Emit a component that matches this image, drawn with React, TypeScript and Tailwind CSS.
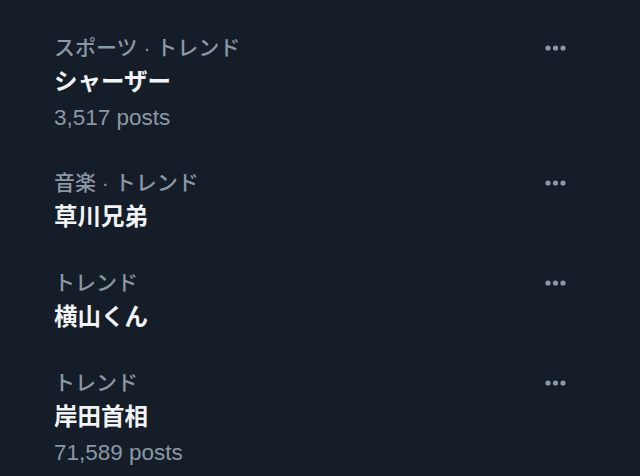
import React from "react";

type Item = { cat: string; title: string; posts?: string };

const items: Item[] = [
  { cat: "スポーツ · トレンド", title: "シャーザー", posts: "3,517 posts" },
  { cat: "音楽 · トレンド", title: "草川兄弟" },
  { cat: "トレンド", title: "横山くん" },
  { cat: "トレンド", title: "岸田首相", posts: "71,589 posts" },
];

function Dots() {
  return (
    <svg width="24" height="8" viewBox="0 0 24 8" className="text-[#8b98a5]">
      <circle cx="4" cy="4" r="2.6" fill="currentColor" />
      <circle cx="11.5" cy="4" r="2.6" fill="currentColor" />
      <circle cx="19" cy="4" r="2.6" fill="currentColor" />
    </svg>
  );
}

export default function App() {
  return (
    <div
      className="w-[640px] h-[476px] overflow-hidden bg-[#151d28] pt-[15px]"
      style={{ fontFamily: '"Liberation Sans", "Noto Sans CJK JP", sans-serif' }}
    >
      {items.map((it, i) => (
        <div key={i} className="flex items-start pl-[54px] pr-[72px] py-[15px]">
          <div className="flex-1 flex flex-col">
            <div className="h-[35px] flex items-center text-[21px] font-medium text-[#8b98a5]">{it.cat}</div>
            <div className="h-[35px] flex items-center text-[23.5px] font-bold text-[#f1f3f5]">{it.title}</div>
            {it.posts && (
              <div className="h-[35px] flex items-center text-[22.5px] text-[#8b98a5]">{it.posts}</div>
            )}
          </div>
          <div className="h-[35px] flex items-center">
            <Dots />
          </div>
        </div>
      ))}
    </div>
  );
}
